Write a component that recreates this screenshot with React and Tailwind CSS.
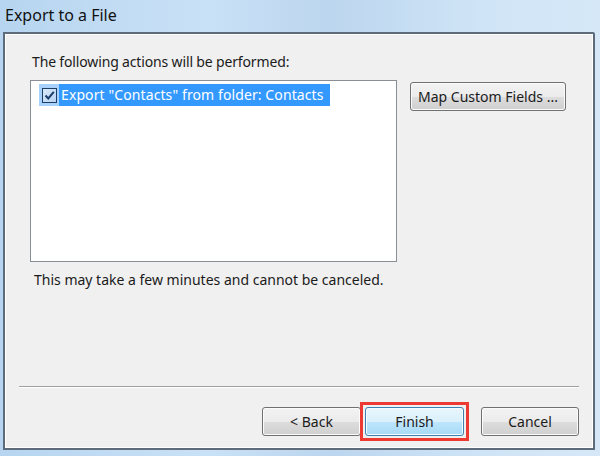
export default function App() {
  const font = { fontFamily: '"Noto Sans", "Open Sans", "Liberation Sans", sans-serif' };
  return (
    <div
      className="w-[600px] h-[456px] flex flex-col overflow-hidden bg-[linear-gradient(90deg,#b7d5f0_0%,#c9e1f6_35%,#bcd6ef_55%,#cfe4f6_80%,#d6e8f8_100%)] text-[#1b1b1b]"
      style={font}
    >
      <div className="h-[32px] shrink-0 pl-[5px] pt-[2px] text-[16px] leading-[26px] text-[#111]">
        Export to a File
      </div>
      <div className="flex-1 ml-[3px] mr-[5px] mb-[6px] border-2 border-[#5d6b7a] rounded-tr-[2px] flex">
        <div className="flex-1 border border-[#ffffff] bg-[#f0f0f0] flex flex-col pl-[24px] pr-[13px]">
          <div className="pt-[17px] pl-[2px] text-[14px] leading-[20px] tracking-[-0.15px]">
            The following actions will be performed:
          </div>
          <div className="mt-[8px] flex items-start">
            <div className="w-[367px] h-[182px] border border-[#8a8f96] bg-white pt-[3px] pl-[8px]">
              <div className="flex items-center h-[22px]">
                <div className="w-[20px] h-[22px] bg-[#a8d1fb] flex items-center justify-center">
                  <div className="w-[15px] h-[15px] border border-[#1c3d66] bg-[linear-gradient(135deg,#d8e9fb,#b7d2f0)] flex items-center justify-center">
                    <svg width="11" height="11" viewBox="0 0 11 11">
                      <path d="M1.5 5.5 L4.3 8.5 L9.8 1.8" fill="none" stroke="#1d3e6a" strokeWidth="2" />
                    </svg>
                  </div>
                </div>
                <div className="bg-[#3399ff] text-white text-[14px] leading-[22px] h-[22px] pl-[2px] pr-[6px] tracking-[0.1px]">
                  Export "Contacts" from folder: Contacts
                </div>
              </div>
            </div>
            <button className="ml-[13px] mt-[2px] w-[156px] h-[29px] border border-[#707070] rounded-[3px] bg-[linear-gradient(180deg,#f3f3f3_0%,#ebebeb_50%,#dddddd_51%,#cfcfcf_100%)] text-[14px] leading-[20px] shadow-[inset_0_0_0_1px_#fbfbfb]">
              Map Custom Fields ...
            </button>
          </div>
          <div className="mt-[8px] pl-[4px] text-[14px] leading-[20px]">
            This may take a few minutes and cannot be canceled.
          </div>
          <div className="flex-1" />
          <div className="ml-[-11px] h-[2px] border-t border-[#a0a0a0] border-b border-b-white" />
          <div className="flex justify-end pt-[19px] pb-[11px]">
            <button className="w-[99px] h-[29px] border border-[#707070] rounded-[3px] bg-[linear-gradient(180deg,#f3f3f3_0%,#ebebeb_50%,#dddddd_51%,#cfcfcf_100%)] text-[14px] shadow-[inset_0_0_0_1px_#fbfbfb]">
              &lt; Back
            </button>
            <div className="ml-[-1px] -my-[5px] mr-[12px] border-[3px] border-[#ec3a33] p-[2px] relative">
              <button className="w-[99px] h-[29px] block border border-[#3c7fb1] rounded-[3px] bg-[linear-gradient(180deg,#eaf6fd_0%,#d9f0fc_50%,#bee6fd_51%,#a7d9f5_100%)] text-[14px] shadow-[inset_0_0_0_1px_#f5fbfe]">
                Finish
              </button>
            </div>
            <button className="w-[98px] h-[29px] border border-[#707070] rounded-[3px] bg-[linear-gradient(180deg,#f3f3f3_0%,#ebebeb_50%,#dddddd_51%,#cfcfcf_100%)] text-[14px] shadow-[inset_0_0_0_1px_#fbfbfb]">
              Cancel
            </button>
          </div>
        </div>
      </div>
    </div>
  );
}
